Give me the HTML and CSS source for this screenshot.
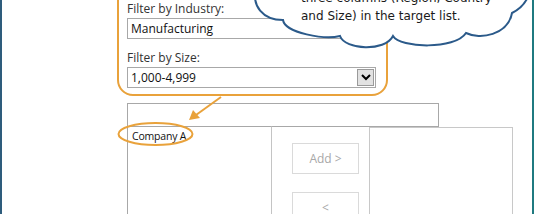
FILE: index.html
```html
<!DOCTYPE html>
<html lang="en">
<head>
    <meta charset="UTF-8">
    <title>Filter Picker</title>
    <link rel="stylesheet" href="styles.css">
</head>
<body>
    <div class="frame">
        <!-- Filters, circled in orange -->
        <div class="filter-box">
            <label class="filter-label">Filter by Industry:</label>
            <div class="dropdown">
                <span>Manufacturing</span>
                <span class="drop-btn"><svg width="10" height="7" viewBox="0 0 10 7"><path d="M1 1 L5 5 L9 1" fill="none" stroke="#000" stroke-width="2"/></svg></span>
            </div>

            <label class="filter-label size-label">Filter by Size:</label>
            <div class="dropdown">
                <span>1,000-4,999</span>
                <span class="drop-btn"><svg width="10" height="7" viewBox="0 0 10 7"><path d="M1 1 L5 5 L9 1" fill="none" stroke="#000" stroke-width="2"/></svg></span>
            </div>
        </div>

        <input type="text" class="search-input">

        <div class="picker">
            <div class="list source-list">
                <div class="list-item">Company A</div>
            </div>
            <div class="picker-buttons">
                <button class="picker-btn" disabled>Add &gt;</button>
                <button class="picker-btn" disabled>&lt;</button>
            </div>
            <div class="list target-list"></div>
        </div>
    </div>

    <!-- Annotations -->
    <svg class="callouts" width="534" height="214" viewBox="0 0 534 214">
        <path d="M256 -10 C252 5 262 20 283 20 C285 33 325 40 340 36 C345 50 385 52 393 36 C400 48 455 50 466 33 C480 40 508 35 512 13 C522 8 528 0 530 -10 L530 -60 L256 -60 Z" fill="#fff" stroke="#2b5a8a" stroke-width="2"/>
        <line x1="221" y1="97" x2="196" y2="115" stroke="#e9a23b" stroke-width="2"/>
        <polygon points="189,120 193,110 200,118" fill="#e9a23b"/>
        <ellipse cx="155.5" cy="134" rx="37" ry="11" fill="none" stroke="#e9a23b" stroke-width="2"/>
    </svg>
    <div class="cloud-text">three columns (Region, Country<br>and Size) in the target list.</div>
</body>
</html>
```

FILE: styles.css
```css
body {
    margin: 0;
    width: 534px;
    height: 214px;
    overflow: hidden;
    position: relative;
    background-color: #fff;
    font-family: "Open Sans", Arial, sans-serif;
    color: #222;
}

.frame {
    display: flow-root;
    height: 214px;
    box-sizing: border-box;
    border-left: 2px solid #2e5c7c;
    border-right: 2px solid #1f7a80;
    padding-left: 115px;
    overflow: hidden;
}

.filter-box {
    width: 271px;
    box-sizing: border-box;
    margin-top: -30px;
    padding: 29px 10px 6px 8px;
    border: 2px solid #e9a23b;
    border-radius: 16px;
}

.filter-label {
    display: block;
    font-size: 12px;
    line-height: 16px;
    color: #333;
}

.size-label {
    margin-top: 11px;
}

.dropdown {
    display: flex;
    justify-content: space-between;
    align-items: center;
    height: 21px;
    box-sizing: border-box;
    margin-top: 1px;
    padding-left: 3px;
    border: 1px solid #a8a8a8;
    font-size: 12px;
    color: #111;
}

.drop-btn {
    display: flex;
    align-items: center;
    justify-content: center;
    width: 17px;
    height: 17px;
    margin-right: 1px;
    box-sizing: border-box;
    background-color: #e2e2e2;
    border: 1px solid #9a9a9a;
}

.search-input {
    display: block;
    width: 312px;
    height: 24px;
    box-sizing: border-box;
    margin: 7px 0 0 10px;
    border: 1px solid #a8a8a8;
    padding: 0;
}

.picker {
    display: flex;
    height: 90px;
    margin-left: 10px;
    margin-top: -1px;
    overflow: hidden;
}

.list {
    height: 100px;
    box-sizing: border-box;
    border: 1px solid #b8b8b8;
}

.source-list {
    width: 145px;
    border-color: #a8a8a8 #c4c4c4 #c4c4c4 #a8a8a8;
}

.target-list {
    width: 144px;
    margin-top: 1px;
    border-color: #c8c8c8;
}

.list-item {
    padding: 2px 0 0 4px;
    font-size: 10.5px;
    line-height: 15px;
    letter-spacing: -0.2px;
    color: #111;
}

.picker-buttons {
    width: 97px;
    box-sizing: border-box;
    padding: 17px 0 0 20px;
    display: flex;
    flex-direction: column;
    gap: 18px;
}

.picker-btn {
    flex: none;
    width: 67px;
    height: 31px;
    background: #fff;
    border: 1px solid #dadada;
    color: #a8a8a8;
    font-family: "Open Sans", Arial, sans-serif;
    font-size: 12px;
    padding: 0;
}

.callouts {
    position: absolute;
    left: 0;
    top: 0;
    pointer-events: none;
}

.cloud-text {
    position: absolute;
    left: 301px;
    top: -11px;
    font-family: "Comic Sans MS", "DejaVu Sans", sans-serif;
    font-size: 12px;
    line-height: 18px;
    color: #1a1a1a;
}
```
